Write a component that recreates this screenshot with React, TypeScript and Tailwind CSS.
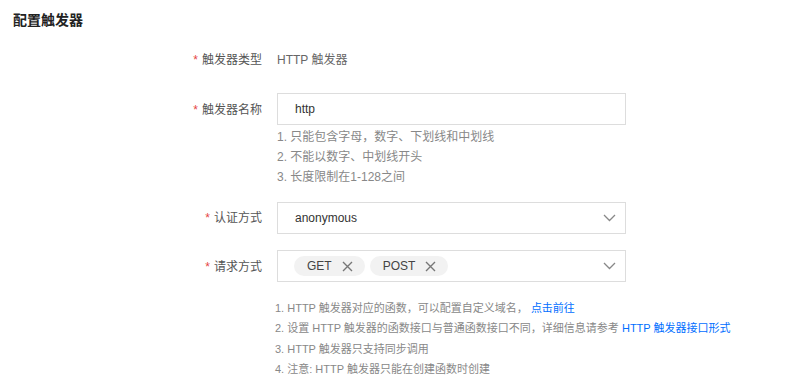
function Label({ text, top = "pt-0" }: { text: string; top?: string }) {
  return (
    <div className={`w-[249px] shrink-0 text-right text-[12px] leading-[20px] text-[#555] ${top}`}>
      <span className="text-[#e54545] mr-[4px]">*</span>
      {text}
    </div>
  );
}

function Chevron() {
  return (
    <svg width="13" height="8" viewBox="0 0 13 8" className="shrink-0">
      <path d="M1 1 L6.5 6.5 L12 1" fill="none" stroke="#888" strokeWidth="1.3" />
    </svg>
  );
}

function Tag({ text }: { text: string }) {
  return (
    <div className="flex h-[20px] items-center rounded-full bg-[#f2f2f2] pl-[13px] pr-[12px] text-[12px] text-[#444]">
      <span>{text}</span>
      <svg width="11" height="11" viewBox="0 0 11 11" className="ml-[10px]">
        <path d="M1 1 L10 10 M10 1 L1 10" stroke="#777" strokeWidth="1.4" />
      </svg>
    </div>
  );
}

export default function App() {
  return (
    <div className="min-h-screen w-[798px] bg-white px-[13px] pt-[10px] font-['Liberation_Sans','Noto_Sans_CJK_SC',sans-serif]">
      <h1 className="text-[14px] font-bold leading-[20px] text-[#222]">配置触发器</h1>

      <div className="mt-[20px] flex">
        <Label text="触发器类型" />
        <div className="ml-[15px] text-[12px] leading-[20px] text-[#666]">HTTP 触发器</div>
      </div>

      <div className="mt-[23px] flex">
        <Label text="触发器名称" top="pt-[7px]" />
        <div className="ml-[15px]">
          <div className="flex h-[32px] w-[349px] items-center border border-[#ddd] pl-[17px] text-[12px] text-[#333]">
            http
          </div>
          <ul className="mt-[2px] text-[12px] leading-[20px] text-[#888]">
            <li>1. 只能包含字母，数字、下划线和中划线</li>
            <li>2. 不能以数字、中划线开头</li>
            <li>3. 长度限制在1-128之间</li>
          </ul>
        </div>
      </div>

      <div className="mt-[15px] flex">
        <Label text="认证方式" top="pt-[6px]" />
        <div className="ml-[15px] flex h-[32px] w-[349px] items-center justify-between border border-[#ddd] pl-[17px] pr-[9px] text-[12px] text-[#333]">
          <span>anonymous</span>
          <Chevron />
        </div>
      </div>

      <div className="mt-[16px] flex">
        <Label text="请求方式" top="pt-[7px]" />
        <div className="ml-[15px] flex h-[32px] w-[349px] items-center justify-between border border-[#ddd] pl-[16px] pr-[9px]">
          <div className="flex gap-[5px]">
            <Tag text="GET" />
            <Tag text="POST" />
          </div>
          <Chevron />
        </div>
      </div>

      <ul className="ml-[262px] mt-[16px] text-[11px] leading-[20.3px] text-[#888]">
        <li>
          1. HTTP 触发器对应的函数，可以配置自定义域名，{" "}
          <span className="text-[#006eff]">点击前往</span>
        </li>
        <li>
          2. 设置 HTTP 触发器的函数接口与普通函数接口不同，详细信息请参考{" "}
          <span className="text-[#006eff]">HTTP 触发器接口形式</span>
        </li>
        <li>3. HTTP 触发器只支持同步调用</li>
        <li>4. 注意: HTTP 触发器只能在创建函数时创建</li>
      </ul>
    </div>
  );
}
